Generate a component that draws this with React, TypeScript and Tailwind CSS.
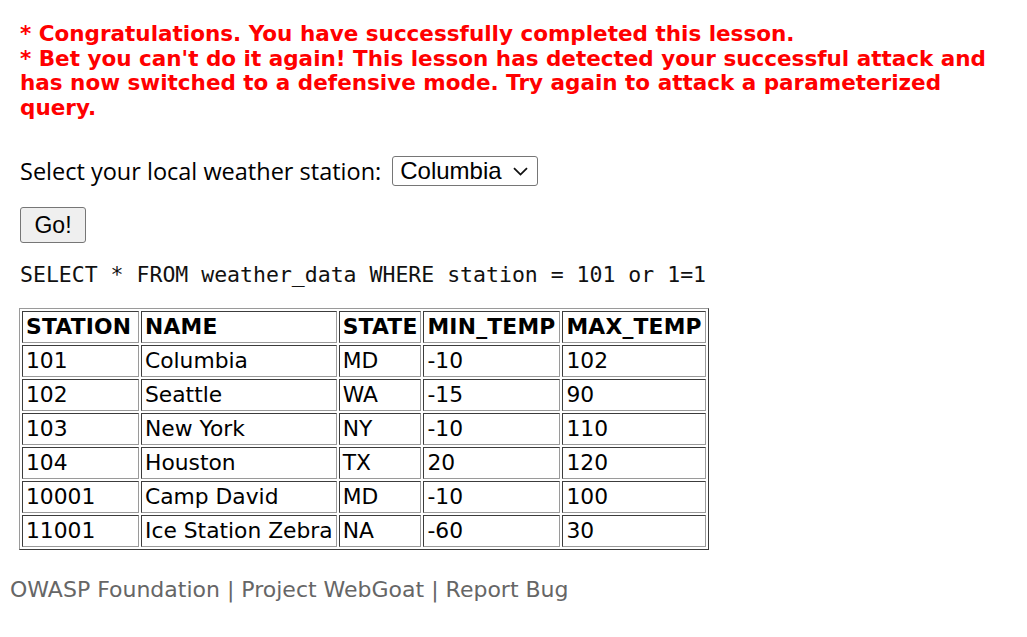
import React from 'react';

interface StationRow {
  station: string;
  name: string;
  state: string;
  minTemp: string;
  maxTemp: string;
}

const ROWS: StationRow[] = [
  { station: '101', name: 'Columbia', state: 'MD', minTemp: '-10', maxTemp: '102' },
  { station: '102', name: 'Seattle', state: 'WA', minTemp: '-15', maxTemp: '90' },
  { station: '103', name: 'New York', state: 'NY', minTemp: '-10', maxTemp: '110' },
  { station: '104', name: 'Houston', state: 'TX', minTemp: '20', maxTemp: '120' },
  { station: '10001', name: 'Camp David', state: 'MD', minTemp: '-10', maxTemp: '100' },
  { station: '11001', name: 'Ice Station Zebra', state: 'NA', minTemp: '-60', maxTemp: '30' },
];

const COLS = ['STATION', 'NAME', 'STATE', 'MIN_TEMP', 'MAX_TEMP'];
const WIDTHS = ['w-[117px]', 'w-[192px]', 'w-[80px]', 'w-[137px]', 'w-[137px]'];

const cell =
  'h-[32px] border border-t-[#3c3c3c] border-l-[#3c3c3c] border-b-[#9a9a9a] border-r-[#9a9a9a] px-[3px] py-0 text-left align-middle whitespace-nowrap overflow-hidden leading-[24px]';

export default function App() {
  return (
    <div className="min-h-screen bg-white">
      <div className="pl-5 pt-[22px]">
        {/* lesson feedback */}
        <div className="font-['DejaVu_Sans',Verdana,sans-serif] text-[21.5px] leading-[24.6px] font-bold text-[#ff0000] whitespace-nowrap">
          <div>* Congratulations. You have successfully completed this lesson.</div>
          <div>* Bet you can't do it again! This lesson has detected your successful attack and</div>
          <div>has now switched to a defensive mode. Try again to attack a parameterized</div>
          <div>query.</div>
        </div>

        {/* station form */}
        <div className="mt-[36px] flex items-center h-[30px] font-['Open_Sans','Noto_Sans',sans-serif] text-[23.5px] text-black">
          <span>Select your local weather station:</span>
          <div className="ml-[11px] flex items-center h-[30px] w-[146px] rounded-[3px] border border-[#767676] bg-white pl-[7px] pr-[9px]">
            <span className="flex-1 font-['Liberation_Sans',Arial,sans-serif] text-[24px] leading-none">Columbia</span>
            <svg width="15" height="9" viewBox="0 0 15 9" fill="none" stroke="#111" strokeWidth="1.8">
              <path d="M1 1.2 L7.5 7.6 L14 1.2" />
            </svg>
          </div>
        </div>

        <button className="mt-[21px] block h-[36px] w-[66px] rounded-[3px] border border-[#767676] bg-[#efefef] font-['Liberation_Sans',Arial,sans-serif] text-[23px] text-black">
          Go!
        </button>

        <div className="mt-[19px] font-['DejaVu_Sans_Mono',monospace] text-[21.5px] leading-[26px] text-[#111] whitespace-nowrap">
          SELECT * FROM weather_data WHERE station = 101 or 1=1
        </div>

        <table className="mt-[20px] ml-[-1px] table-fixed border-separate border-spacing-[2.5px] border border-t-[#9a9a9a] border-l-[#9a9a9a] border-b-[#3c3c3c] border-r-[#3c3c3c] font-['DejaVu_Sans',Verdana,sans-serif] text-[21.8px] text-black">
          <thead>
            <tr>
              {COLS.map((c, i) => (
                <th key={c} className={`${cell} ${WIDTHS[i]} font-bold tracking-[0.2px]`}>
                  {c}
                </th>
              ))}
            </tr>
          </thead>
          <tbody>
            {ROWS.map((r) => (
              <tr key={r.station}>
                <td className={cell}>{r.station}</td>
                <td className={cell}>{r.name}</td>
                <td className={cell}>{r.state}</td>
                <td className={cell}>{r.minTemp}</td>
                <td className={cell}>{r.maxTemp}</td>
              </tr>
            ))}
          </tbody>
        </table>
      </div>

      {/* footer */}
      <div className="mt-[28px] pl-[10px] font-['DejaVu_Sans',Verdana,sans-serif] text-[22px] leading-[24px] text-[#666666]">
        OWASP Foundation | Project WebGoat | Report Bug
      </div>
    </div>
  );
}
